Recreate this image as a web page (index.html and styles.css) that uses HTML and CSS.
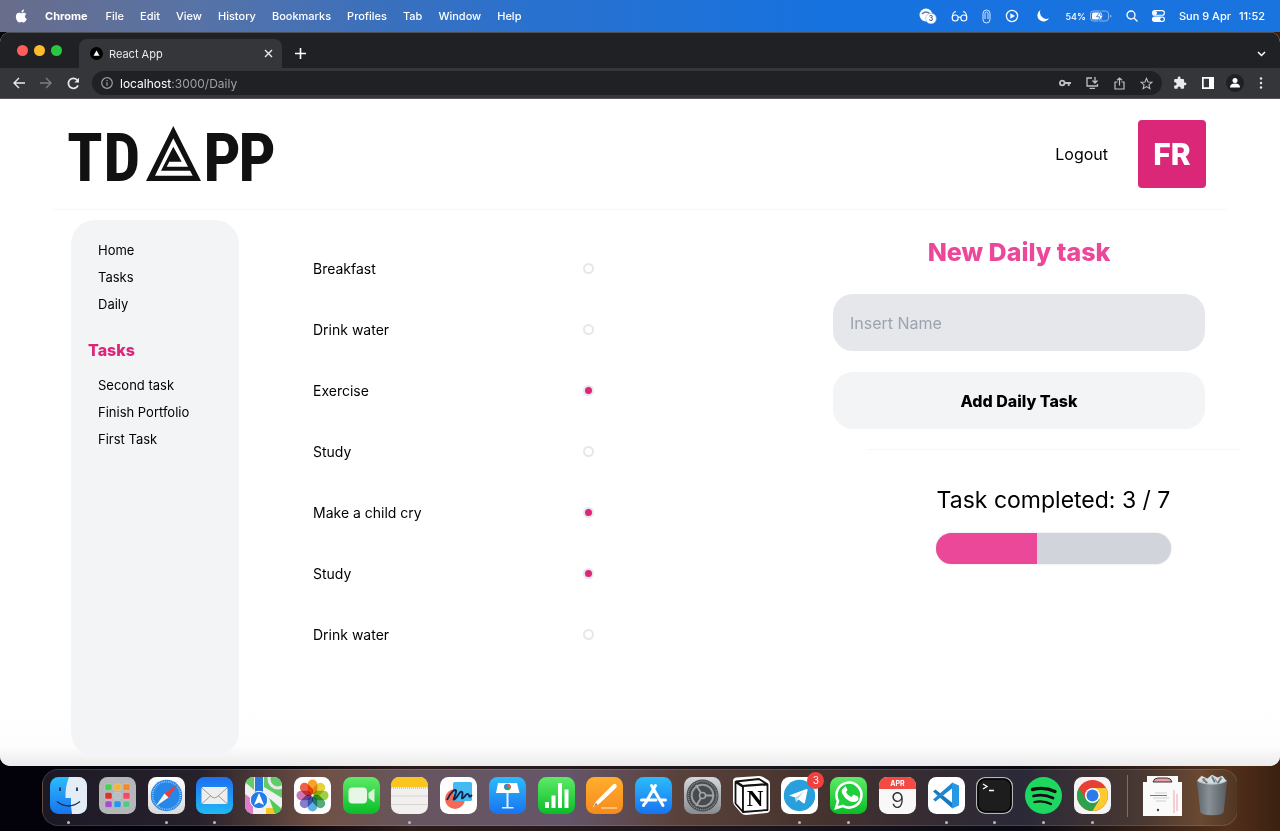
FILE: index.html
```html
<!DOCTYPE html>
<html lang="en">
<head>
<meta charset="utf-8">
<title>React App</title>
<link rel="stylesheet" href="styles.css">
</head>
<body>
<div class="desktop">
  <header class="menubar">
    <nav class="menus" aria-label="Menu bar">
      <svg class="apple" viewBox="0 0 24 24" width="14" height="14" fill="currentColor"><path d="M17 13c0-3 2.400-4.300 2.500-4.400-1.400-2-3.500-2.300-4.200-2.300-1.800-.2-3.500 1-4.400 1s-2.300-1-3.700-1C4 6.400 1.500 9 1.500 13.200 1.500 18 5 23 7.500 23c1.300 0 1.900-.9 3.600-.9s2.200.9 3.600.9c2.800 0 5-4.500 5.500-6-.1 0-3.200-1.200-3.200-4zM14.300 4.500c.8-1 1.300-2.300 1.100-3.600-1.100 0-2.500.8-3.300 1.700-.7.800-1.300 2.100-1.200 3.400 1.300.1 2.600-.6 3.400-1.500z"/></svg>
      <b>Chrome</b><span>File</span><span>Edit</span><span>View</span><span>History</span><span>Bookmarks</span><span>Profiles</span><span>Tab</span><span>Window</span><span>Help</span>
    </nav>
    <div class="status">
      <svg width="18" height="16" viewBox="0 0 18 16"><circle cx="7" cy="7" r="6.500" fill="#fff"/><path d="M3 6q4-4 8 0" stroke="#667ba8" stroke-width="1.500" fill="none"/><circle cx="12" cy="10.500" r="5.300" fill="#fff" stroke="#8aaade" stroke-width=".6"/><text x="12" y="13" text-anchor="middle" class="tiny-num">3</text></svg>
      <svg width="17" height="14" viewBox="0 0 17 14" fill="none" stroke="#fff" stroke-width="1.100"><circle cx="4.200" cy="9" r="3"/><circle cx="12.800" cy="9" r="3"/><path d="M7.200 8.500q1.300-1 2.600 0M1.200 8.500Q1.500 3 5 2.500M15.800 8.500Q15.500 3 12 2.500"/></svg>
      <svg width="9" height="15" viewBox="0 0 9 15" fill="none" stroke="#dbe8fb" stroke-width="1"><path d="M1 4.500a3.500 3.500 0 0 1 7 0v6a3.500 3.500 0 0 1-7 0zM3 10V4.500a1.500 1.500 0 0 1 3 0V10"/></svg>
      <svg width="14" height="14" viewBox="0 0 14 14"><circle cx="7" cy="7" r="5.600" fill="none" stroke="#fff" stroke-width="1.300"/><path d="M5.300 4.300v5.400L10 7z" fill="#fff"/></svg>
      <svg class="moon" width="14" height="14" viewBox="0 0 14 14"><path d="M4.500 1a6.200 6.200 0 1 0 8.600 8.200A6.400 6.400 0 0 1 4.500 1z" fill="#fff"/></svg>
      <span class="battery">54%<svg width="22" height="12" viewBox="0 0 22 12"><rect x=".5" y="1" width="18" height="10" rx="3" fill="none" stroke="#8db6ef"/><rect x="2" y="2.500" width="10" height="7" rx="1.500" fill="#fff"/><path d="M20 4.500v3q1.500-.5 1.500-1.500T20 4.500z" fill="#8db6ef"/><path d="M11.500 0L6.500 6.700h3L8.500 12l5-6.700h-3z" fill="#fff" stroke="#2272dc" stroke-width=".8"/></svg></span>
      <svg width="12" height="12" viewBox="0 0 12 12" fill="none" stroke="#fff" stroke-width="1.300"><circle cx="5" cy="5" r="4"/><path d="M8 8l3.500 3.500"/></svg>
      <svg width="13" height="12" viewBox="0 0 13 12"><rect x=".6" y=".6" width="11.800" height="4.600" rx="2.300" fill="none" stroke="#fff" stroke-width="1.100"/><circle cx="3" cy="2.900" r="2" fill="#fff"/><rect y="6.600" width="13" height="5.400" rx="2.700" fill="#fff"/><circle cx="10" cy="9.300" r="1.700" fill="#2272dc"/></svg>
      <span class="clock"><span>Sun 9 Apr</span><span>11:52</span></span>
    </div>
  </header>

  <main class="window">
    <div class="tabstrip">
      <div class="lights"><i class="red"></i><i class="yellow"></i><i class="green"></i></div>
      <div class="tab">
        <svg width="13" height="13" viewBox="0 0 13 13"><circle cx="6.500" cy="6.500" r="6.500"/><path d="M6.500 3.500l3 5.200h-6z" fill="#fff"/></svg>
        <span>React App</span>
        <button class="plain" aria-label="Close tab"><svg width="9" height="9" viewBox="0 0 9 9" stroke="#e8eaed" stroke-width="1.400"><path d="M1 1l7 7M8 1L1 8"/></svg></button>
      </div>
      <button class="plain newtab" aria-label="New tab"><svg width="11" height="11" viewBox="0 0 11 11" stroke="#fff" stroke-width="1.600"><path d="M5.500 0v11M0 5.500h11"/></svg></button>
      <button class="plain chevron" aria-label="Search tabs"><svg width="9" height="6" viewBox="0 0 9 6" fill="none" stroke="#fff" stroke-width="1.500"><path d="M1 1l3.500 3.500L8 1"/></svg></button>
    </div>
    <div class="toolbar">
      <button class="plain" aria-label="Back"><svg width="12" height="12" viewBox="0 0 12 12" fill="none" stroke="#e8eaed" stroke-width="1.400"><path d="M12 6H1M6 1L1 6l5 5"/></svg></button>
      <button class="plain" aria-label="Forward"><svg width="12" height="12" viewBox="0 0 12 12" fill="none" stroke="#7d7e82" stroke-width="1.400"><path d="M0 6h11M6 1l5 5-5 5"/></svg></button>
      <button class="plain" aria-label="Reload"><svg width="13" height="13" viewBox="0 0 13 13" fill="none" stroke="#e8eaed" stroke-width="1.700"><path d="M11 8.300A5 5 0 1 1 10.200 3"/><path d="M12 .8v4.700H7.300z" fill="#e8eaed" stroke="none"/></svg></button>
      <div class="omnibox">
        <svg width="12" height="12" viewBox="0 0 12 12" fill="none" stroke="#9aa0a6" stroke-width="1.200"><circle cx="6" cy="6" r="5.300"/><path d="M6 5.200v3.600M6 3v1.300"/></svg>
        <span class="url"><em>localhost</em>:3000/Daily</span>
        <svg width="12" height="8" viewBox="0 0 12 8" fill="none" stroke="#bdc1c6" stroke-width="1.800"><circle cx="3.200" cy="4" r="2.300"/><path d="M5.600 4H12M9.700 4v2.900"/></svg>
        <svg width="13" height="12" viewBox="0 0 13 12" fill="none" stroke="#bdc1c6" stroke-width="1.300"><path d="M6 1H1v8h10.500V7M3.500 11.300H9M9 0v5.500M6.500 3.500L9 6l2.500-2.500"/></svg>
        <svg width="11" height="13" viewBox="0 0 11 13" fill="none" stroke="#bdc1c6" stroke-width="1.200"><path d="M3.500 5H1v7h9V5H7.500M5.500 8.500V1M3 3.300L5.500 1 8 3.300"/></svg>
        <svg width="13" height="13" viewBox="0 0 24 24" fill="none" stroke="#bdc1c6" stroke-width="2"><path d="M12 2.500l2.800 6.700 7.200.6-5.500 4.700 1.700 7L12 17.800l-6.200 3.700 1.700-7L2 9.800l7.200-.6z"/></svg>
      </div>
      <svg width="14" height="14" viewBox="0 0 24 24" fill="#e8eaed"><path d="M20.500 11H19V7c0-1.100-.9-2-2-2h-4V3.500a2.500 2.500 0 0 0-5 0V5H4c-1.100 0-2 .9-2 2v3.800h1.500a2.700 2.700 0 0 1 0 5.400H2V20c0 1.100.9 2 2 2h3.800v-1.500a2.700 2.700 0 0 1 5.400 0V22H17c1.100 0 2-.9 2-2v-4h1.500a2.500 2.500 0 0 0 0-5z"/></svg>
      <svg width="12" height="12" viewBox="0 0 12 12"><path d="M0 0h12v12H0zM1.700 1.700v8.600H7V1.700z" fill="#fff" fill-rule="evenodd"/></svg>
      <svg class="profile" width="18" height="18" viewBox="0 0 18 18"><circle cx="9" cy="9" r="9" fill="#1f2023"/><circle cx="9" cy="6.500" r="2.500" fill="#fff"/><path d="M4 13.500q0-4 5-4t5 4z" fill="#fff"/></svg>
      <svg width="4" height="12" viewBox="0 0 4 12" fill="#e8eaed"><circle cx="2" cy="1.500" r="1.200"/><circle cx="2" cy="6" r="1.200"/><circle cx="2" cy="10.500" r="1.200"/></svg>
    </div>

    <div class="page">
      <header class="site-head">
        <svg class="logo" width="208" height="100" viewBox="0 -20 208 100" role="img" aria-label="TDAPP">
          <g class="wordmark"><text x="16" y="57">T</text><text x="53" y="57">D</text><text x="153" y="57">P</text><text x="188" y="57">P</text></g>
          <path d="M104.300 2L132 57H77zM104.300 14.300L86 51.700h37.700z" fill="#111" fill-rule="evenodd"/>
          <path d="M104.300 22.700L112.700 37.700H100.300L97.700 42.700H120L124 46.700H92z" fill="#111"/>
        </svg>
        <div class="account"><a href="#logout">Logout</a><div class="avatar">FR</div></div>
      </header>
      <div class="columns">
        <aside class="sidebar">
          <nav><a href="#home">Home</a><a href="#tasks">Tasks</a><a href="#daily">Daily</a></nav>
          <h2>Tasks</h2>
          <nav><a href="#second">Second task</a><a href="#portfolio">Finish Portfolio</a><a href="#first">First Task</a></nav>
        </aside>
        <ul class="tasks">
          <li><label for="t1">Breakfast</label><input type="checkbox" id="t1"></li>
          <li><label for="t2">Drink water</label><input type="checkbox" id="t2"></li>
          <li><label for="t3">Exercise</label><input type="checkbox" id="t3" checked></li>
          <li><label for="t4">Study</label><input type="checkbox" id="t4"></li>
          <li><label for="t5">Make a child cry</label><input type="checkbox" id="t5" checked></li>
          <li><label for="t6">Study</label><input type="checkbox" id="t6" checked></li>
          <li><label for="t7">Drink water</label><input type="checkbox" id="t7"></li>
        </ul>
        <section class="panel">
          <form>
            <h1>New Daily task</h1>
            <input type="text" placeholder="Insert Name" aria-label="Insert Name">
            <button type="button">Add Daily Task</button>
          </form>
          <div class="summary">
            <p>Task completed: 3 / 7</p>
            <div class="progress" role="progressbar" aria-label="Tasks completed" aria-valuemin="0" aria-valuemax="7" aria-valuenow="3"><div class="bar" style="width:42.8%"></div></div>
          </div>
        </section>
      </div>
    </div>
  </main>

  <svg class="defs" width="0" height="0" aria-hidden="true"><defs>
    <linearGradient id="blue" x2="0" y2="1"><stop stop-color="#1d6ff0"/><stop offset="1" stop-color="#22b8f5"/></linearGradient>
    <linearGradient id="sky" x2="0" y2="1"><stop stop-color="#2bbcfb"/><stop offset="1" stop-color="#1873f0"/></linearGradient>
    <linearGradient id="green" x2="0" y2="1"><stop stop-color="#5eea68"/><stop offset="1" stop-color="#08bd27"/></linearGradient>
    <linearGradient id="orange" x2="0" y2="1"><stop stop-color="#ffae2d"/><stop offset="1" stop-color="#f78a1c"/></linearGradient>
    <linearGradient id="silver" x2="0" y2="1"><stop stop-color="#fff"/><stop offset="1" stop-color="#d9d9d9"/></linearGradient>
    <linearGradient id="grey" x2="0" y2="1"><stop stop-color="#d3d7dc"/><stop offset="1" stop-color="#888c91"/></linearGradient>
    <linearGradient id="can" x2="1" y2="0"><stop stop-color="#5d666b"/><stop offset=".4" stop-color="#899196"/><stop offset="1" stop-color="#555b60"/></linearGradient>
    <clipPath id="tile"><rect width="37" height="37" rx="8.500"/></clipPath>
  </defs></svg>

  <footer class="shelf">
    <div class="dock">
      <div class="apps">
        <div class="app on"><svg viewBox="0 0 37 37"><g clip-path="url(#tile)"><path fill="url(#sky)" d="M0 0h37v37H0z"/><path d="M19 0q-4 10-3.500 21H21q-.5 8 1 16h15V0z" fill="#e4edf5"/></g><path d="M10 10.500v3.500M27 10.500v3.500" stroke="#17304c" stroke-width="1.800"/><path d="M7 24.500q11.500 9 23 0" fill="none" stroke="#17304c" stroke-width="1.300"/></svg></div>
        <div class="app"><svg viewBox="0 0 37 37"><rect width="37" height="37" rx="8.500" fill="#b4b6ba"/><g stroke="#d6d6d8" stroke-width=".4"><rect x="6" y="7" width="7" height="6.500" rx="1.500" fill="#4bd057"/><rect x="15" y="7" width="7" height="6.500" rx="1.500" fill="#f6b52c"/><rect x="24" y="7" width="7" height="6.500" rx="1.500" fill="#f18a29"/><rect x="6" y="15.500" width="7" height="6.500" rx="1.500" fill="#dc3131"/><rect x="15" y="15.500" width="7" height="6.500" rx="1.500" fill="#b9bec4"/><rect x="24" y="15.500" width="7" height="6.500" rx="1.500" fill="#fa4766"/><rect x="6" y="24" width="7" height="6.500" rx="1.500" fill="#aa4bd1"/><rect x="15" y="24" width="7" height="6.500" rx="1.500" fill="#2497ee"/><rect x="24" y="24" width="7" height="6.500" rx="1.500" fill="#54ca80"/></g></svg></div>
        <div class="app on"><svg viewBox="0 0 37 37"><rect width="37" height="37" rx="8.500" fill="url(#silver)"/><circle cx="18.500" cy="18.500" r="15.700" fill="#2787e8"/><circle cx="18.500" cy="18.500" r="13.900" fill="none" stroke="#b6dcfb" stroke-width="1.800" stroke-dasharray=".6 1.200"/><path d="M29.500 7.500L20.500 20.500l-4-4z" fill="#ee3b36"/><path d="M7.500 29.500l9-13 4 4z" fill="#f5f5f5"/></svg></div>
        <div class="app on"><svg viewBox="0 0 37 37"><rect width="37" height="37" rx="8.500" fill="url(#blue)"/><rect x="5.500" y="10" width="26" height="17" rx="1.500" fill="#eee"/><path d="M6 11l10 9q2.500 2 5 0l10-9M6 26.500l9-8M31 26.500l-9-8" fill="none" stroke="#888" stroke-width=".8"/></svg></div>
        <div class="app"><svg viewBox="0 0 37 37"><g clip-path="url(#tile)"><path fill="#eef1ef" d="M0 0h37v37H0z"/><path d="M0 0h9v13L0 5zM19 0h18v21L19 10z" fill="#61cc69"/><circle cx="33" cy="2" r="9" fill="none" stroke="#e8e8e8" stroke-width="3"/><path d="M0 17l8 6v14H0z" fill="#df7cc9"/><path d="M21 31h9v6h-9z" fill="#f9c624"/><path d="M24 21l13 11v5H30z" fill="#4ecb58"/><path d="M10 0h8v19h-8z" fill="#2b79de"/></g><circle cx="14" cy="23" r="8.700" fill="#247ce9" stroke="#fff"/><path d="M14 16l5 12-5-2.500L9 28z" fill="#fff"/></svg></div>
        <div class="app"><svg viewBox="0 0 37 37"><rect width="37" height="37" rx="8.500" fill="#fff"/><g class="petals"><rect x="13.700" y="2.500" width="9.600" height="15" rx="4.800" fill="#f9a22a"/><rect x="13.700" y="2.500" width="9.600" height="15" rx="4.800" fill="#e3d334" transform="rotate(45 18.500 18.500)"/><rect x="13.700" y="2.500" width="9.600" height="15" rx="4.800" fill="#a0cf45" transform="rotate(90 18.500 18.500)"/><rect x="13.700" y="2.500" width="9.600" height="15" rx="4.800" fill="#50af79" transform="rotate(135 18.500 18.500)"/><rect x="13.700" y="2.500" width="9.600" height="15" rx="4.800" fill="#61aee1" transform="rotate(180 18.500 18.500)"/><rect x="13.700" y="2.500" width="9.600" height="15" rx="4.800" fill="#8a7dcc" transform="rotate(225 18.500 18.500)"/><rect x="13.700" y="2.500" width="9.600" height="15" rx="4.800" fill="#cb79b2" transform="rotate(270 18.500 18.500)"/><rect x="13.700" y="2.500" width="9.600" height="15" rx="4.800" fill="#ee604c" transform="rotate(315 18.500 18.500)"/></g></svg></div>
        <div class="app"><svg viewBox="0 0 37 37"><rect width="37" height="37" rx="8.500" fill="url(#green)"/><rect x="5.500" y="10.500" width="18.500" height="16" rx="4" fill="#e6f7e6"/><path d="M25.500 16l6-4.500v14l-6-4.500z" fill="#d9f3da"/></svg></div>
        <div class="app on"><svg viewBox="0 0 37 37"><g clip-path="url(#tile)"><path fill="#f1f0ee" d="M0 0h37v37H0z"/><path fill="#f9c51e" d="M0 0h37v10H0z"/><path d="M0 11h37" stroke="#aaa" stroke-dasharray="1 1"/><path d="M0 19h37M0 27.500h37" stroke="#d6d5d3"/></g></svg></div>
        <div class="app"><svg viewBox="0 0 37 37"><rect width="37" height="37" rx="8.500" fill="#fff"/><circle cx="15" cy="22" r="10" fill="#f36b58"/><rect x="13" y="5" width="19" height="19" rx="1.500" fill="#45baf0"/><path d="M7 23C10 15 17 10 16 15s-4 9-1 7 5-9 7-7-2 8 1 6 3-5 5-4 0 5 4 1" fill="none" stroke="#142549" stroke-width="1.900"/></svg></div>
        <div class="app"><svg viewBox="0 0 37 37"><rect width="37" height="37" rx="8.500" fill="url(#sky)"/><path d="M9 6h19l2.500 10H7z" fill="#fff"/><path d="M17.500 16h2v14h-2zM13 30h11.500v1.500H13z" fill="#e0effa"/><circle cx="18.500" cy="10" r="3.300" fill="#29a46d"/><path d="M18.500 10V6.700a3.300 3.300 0 0 1 3 4.700z" fill="#f05b42"/><path d="M18.500 10l-3 1.500a3.300 3.300 0 0 1 3-4.800z" fill="#2e83ee"/></svg></div>
        <div class="app"><svg viewBox="0 0 37 37"><rect width="37" height="37" rx="8.500" fill="url(#green)"/><path d="M7 25h4v6H7zM13.500 18.500h4V31h-4zM20 6h4v25h-4zM26.500 12.500h4V31h-4z" fill="#fff"/></svg></div>
        <div class="app"><svg viewBox="0 0 37 37"><rect width="37" height="37" rx="8.500" fill="url(#orange)"/><path d="M6.500 30.500l3.500-6L27 7.500q2-1.500 3.200 0t0 3.200L13 27z" fill="#fff"/><path d="M7.500 30l2.500-4 1.500 1.500z" fill="#ad713c"/><path d="M15 31h16" stroke="#ffe0af" stroke-width="1.200"/></svg></div>
        <div class="app"><svg viewBox="0 0 37 37"><rect width="37" height="37" rx="8.500" fill="url(#sky)"/><g stroke="#fff" stroke-width="3" stroke-linecap="round"><path d="M20.500 8.500L10.500 26M16.500 8.500l11.500 20M6.500 23h14.500M25.500 23h5M8.500 28.500l.7-1.300"/></g></svg></div>
        <div class="app"><svg viewBox="0 0 37 37"><rect width="37" height="37" rx="8.500" fill="url(#grey)"/><circle cx="18.500" cy="18.500" r="16" fill="#484b4d"/><circle cx="18.500" cy="18.500" r="14.300" fill="none" stroke="#8e9194" stroke-width="1.500" stroke-dasharray="1 1"/><circle cx="18.500" cy="18.500" r="10.800" fill="none" stroke="#9a9da0" stroke-width="2"/><circle cx="18.500" cy="18.500" r="3" fill="none" stroke="#a3a6a8" stroke-width="1.500"/><path d="M21 18.500h9M17 16l-5-8M17 21l-5 8" stroke="#a3a6a8" stroke-width="1.800"/></svg></div>
        <div class="app"><svg viewBox="0 0 37 37"><path d="M0 4Q0 1 3 .5L26-1q2 0 4 1l5 3q2 1 2 4v25q0 4-4 4L13 38q-3 0-5-2l-6-7q-2-2-2-5z" fill="#fff"/><path d="M3 4.500L26 2l8 5-24 2z" fill="#fff" stroke="#111" stroke-width="1.800" stroke-linejoin="round"/><path d="M2.500 5L10 10v25l-7.500-8.500z" fill="#fff" stroke="#111" stroke-width="1.800" stroke-linejoin="round"/><path d="M10 9l24.500-1.500V33L10 35z" fill="#fff" stroke="#111" stroke-width="1.800" stroke-linejoin="round"/><text x="22" y="29" text-anchor="middle" class="notion-n">N</text></svg></div>
        <div class="app on"><svg viewBox="0 0 37 37"><rect width="37" height="37" rx="8.500" fill="#fff"/><circle cx="18.500" cy="18.500" r="15.700" fill="#299fdb"/><path d="M8 18.500L25.500 12q1.500-.5 1 1.500l-2.500 12q-.5 1.500-2 .5l-4.500-3.500-2.500 2.500-.7-4.500z" fill="#fff"/><path d="M14.300 20.500l9-6-6.500 7-1.500 3.500z" fill="#b5d5ea"/></svg><span class="badge">3</span></div>
        <div class="app on"><svg viewBox="0 0 37 37"><rect width="37" height="37" rx="8.500" fill="url(#green)"/><path d="M6 31l2-7a12.500 12.500 0 1 1 4.800 4.900z" fill="#20ce3b" stroke="#fff" stroke-width="2.600"/><path d="M13.500 11q-3 2-1 6t6 6.500 7.500 1 2-5l-4.500-2-2 2.500q-4-1.500-5.500-5l1.500-2-2-4z" fill="#fff"/></svg></div>
        <div class="app"><svg viewBox="0 0 37 37"><g clip-path="url(#tile)"><path fill="#f8f8f8" d="M0 0h37v37H0z"/><path fill="#f34a44" d="M0 0h37v12H0z"/></g><text x="18.500" y="9" text-anchor="middle" class="cal-month">APR</text><text x="18.500" y="31" text-anchor="middle" class="cal-day">9</text></svg></div>
        <div class="app on"><svg viewBox="0 0 37 37"><rect width="37" height="37" rx="8.500" fill="#fff"/><path d="M5 14.500l2.500-2 17 13.500v5.500z" fill="#1678bd"/><path d="M5 22.500l2.500 2 17-13.500V5.500z" fill="#1f86cf"/><path d="M24 5.500l7 3v20l-7 3z" fill="#2798e6"/></svg></div>
        <div class="app on"><svg viewBox="0 0 37 37"><rect x=".7" y=".7" width="35.600" height="35.600" rx="8.500" fill="#1d1d1d" stroke="#b6b6b6" stroke-width="1.400"/><rect x="2" y="2" width="33" height="33" rx="7.500" fill="none" stroke="#000" stroke-width="1.500"/><path d="M7 7l4 2.500L7 12M13 13.500h5" fill="none" stroke="#fff" stroke-width="1.300"/></svg></div>
        <div class="app on"><svg viewBox="0 0 37 37"><circle cx="18.500" cy="18.500" r="18.500" fill="#1ed760"/><g fill="none" stroke="#111" stroke-linecap="round"><path d="M7.500 12.500q12-3 22.500 2" stroke-width="3.400"/><path d="M8.500 19q10.500-2.500 19.500 2" stroke-width="2.800"/><path d="M9.500 25q9-2 16.500 2" stroke-width="2.300"/></g></svg></div>
        <div class="app on"><svg viewBox="0 0 37 37"><rect width="37" height="37" rx="8.500" fill="#f4f4f4"/><circle cx="18.500" cy="18.500" r="15.500" fill="#e64134"/><path d="M5 11A15.500 15.500 0 0 0 18.500 34l7-11.500H12z" fill="#2da24d"/><path d="M18.500 34A15.500 15.500 0 0 0 32 11H18.500l7 11.500z" fill="#fdcb2e"/><circle cx="18.500" cy="18.500" r="7.600" fill="#fff"/><circle cx="18.500" cy="18.500" r="6" fill="#2d7aea"/></svg></div>
      </div>
      <div class="divider"></div>
      <svg class="doc" width="39" height="40" viewBox="0 0 39 40"><path d="M4 0h31v6h4v34H0V6h4z" fill="#fafafa"/><path d="M10 6q1-4 5-4h9q4 0 5 4z" fill="#ee9aa5" stroke="#333"/><path d="M12 17h12M10 22h16M13 25h10" stroke="#bbb" stroke-width=".7"/><path d="M7 19.500h17" stroke="#777"/><path d="M31 14v23M34 18v17" stroke="#f3cfd2" stroke-width="2"/><circle cx="15" cy="34" r="1.200" fill="#444"/></svg>
      <svg class="trash" width="32" height="43" viewBox="0 0 34 44"><path d="M2 5l4-4 6 3 5-4 6 3 5-2 4 5v5H2z" fill="#d9dcdc"/><path d="M7 4l5 5M17 2l3 6M27 3l-4 6" stroke="#557e8e" stroke-width="2"/><path d="M20 4l3 5M10 3l-3 5" stroke="#bd6f64"/><path d="M1 6l3.500 33q.5 4 12.500 4t12.500-4L33 6q-5 4-16 4T1 6z" fill="url(#can)"/><path d="M1 6q5 4 16 4t16-4" fill="none" stroke="#afb6ba"/></svg>
    </div>
  </footer>
</div>
</body>
</html>
```

FILE: styles.css
```css
* { box-sizing: border-box; }
body { margin: 0; font-family: Inter, "Liberation Sans", sans-serif; color: #000; }
svg { display: block; flex: none; }
a { color: inherit; text-decoration: none; }
.defs { position: absolute; }
.plain { border: 0; padding: 0; background: none; display: flex; }

.desktop {
  min-height: 100vh;
  display: flex;
  flex-direction: column;
  background: linear-gradient(90deg, #03020b 0 22%, #2d1c19 32%, #18141d 60%, #090911 80%, #52301b 96%, #3b2010);
}

.menubar {
  height: 32px;
  padding: 0 15px;
  display: flex;
  justify-content: space-between;
  align-items: center;
  color: #fff;
  font-size: 11px;
  font-weight: 500;
  background: linear-gradient(90deg, #696d8b, #5873a6 15%, #3a70bd 30%, #2971cf 42%, #1672df 65%, #1a74df);
}
.menus { display: flex; align-items: center; gap: 16px; }
.menus b { font-weight: 700; margin-right: 2px; }
.status { display: flex; align-items: center; gap: 14px; }
.moon { margin-left: 3px; }
.battery { display: flex; align-items: center; gap: 4px; font-size: 9px; margin-left: 2px; }
.clock { display: flex; gap: 8px; }
.tiny-num { font-size: 7px; font-weight: 700; fill: #54699a; }

.window {
  flex: 1;
  display: flex;
  flex-direction: column;
  border-radius: 10px;
  overflow: hidden;
  background: #fff;
}
.tabstrip { height: 36px; display: flex; align-items: stretch; background: #202124; border-top: 1px solid #4c4f54; }
.lights { display: flex; gap: 6px; align-items: center; width: 79px; padding-left: 17px; }
.lights i { width: 11px; height: 11px; border-radius: 50%; }
.red { background: #ff5c5c; }
.yellow { background: #fdbc2e; }
.green { background: #28c840; }
.tab {
  width: 203px;
  margin-top: 6px;
  padding: 0 9px 0 11px;
  border-radius: 8px 8px 0 0;
  display: flex;
  align-items: center;
  gap: 6px;
  background: #35363a;
  color: #e8eaed;
  font-size: 11px;
}
.tab span { flex: 1; }
.newtab { align-items: center; margin: 6px 0 0 13px; }
.chevron { align-items: center; margin: 6px 14px 0 auto; }
.toolbar { height: 31px; padding: 0 17px 0 13px; display: flex; align-items: center; gap: 15px; background: #35363a; border-bottom: 1px solid #55565a; }
.omnibox {
  flex: 1;
  height: 24px;
  margin: 0 -4px 0 -3px;
  padding: 0 9px;
  border-radius: 12px;
  display: flex;
  align-items: center;
  gap: 15px;
  background: #202124;
  font-size: 12px;
}
.url { flex: 1; color: #9aa0a6; margin-left: -8px; }
.url em { font-style: normal; color: #fff; }
.profile { margin-left: -3px; }

.page {
  flex: 1;
  display: flex;
  flex-direction: column;
  padding: 0 53px 10px;
  background: linear-gradient(0deg, #ebebeb, #fdfdfd 20px, #fff 60px);
}
.site-head {
  height: 111px;
  padding: 0 21px 0 16px;
  display: flex;
  align-items: center;
  justify-content: space-between;
  border-bottom: 1px solid #f7f7f8;
}
.logo { overflow: visible; }
.wordmark { font-family: "Liberation Sans Narrow", "Roboto Condensed", "DejaVu Sans Condensed", sans-serif; font-weight: 700; font-size: 66px; fill: #111; text-anchor: middle; }
.account { display: flex; align-items: center; gap: 30px; font-size: 16px; }
.avatar {
  width: 68px;
  height: 68px;
  border-radius: 4px;
  display: grid;
  place-items: center;
  background: #db2777;
  color: #fff;
  font-size: 30px;
  font-weight: 800;
}

.columns { flex: 1; display: grid; grid-template-columns: 168px 281px 1fr; column-gap: 74px; padding: 10px 22px 0 18px; }
.sidebar { padding: 17px; border-radius: 24px; background: #f3f4f6; }
.sidebar nav { display: flex; flex-direction: column; padding-left: 10px; font-size: 13px; line-height: 27px; }
.sidebar h2 { margin: 18px 0 8px; font-size: 16px; line-height: 28px; font-weight: 800; color: #db2777; }
.tasks { list-style: none; margin: 0; padding: 18px 0 0; font-size: 14px; }
.tasks li { height: 61px; display: flex; align-items: center; justify-content: space-between; }
.tasks input { appearance: none; width: 11px; height: 11px; margin: 0; border: 2px solid #e5e7eb; border-radius: 50%; background: #fff; }
.tasks input:checked { background: #db2777; }

.panel { width: 372px; justify-self: end; }
.panel form { display: flex; flex-direction: column; gap: 21px; }
.panel h1 { margin: 15px 0 4px; font-size: 25px; line-height: 34px; font-weight: 800; text-align: center; color: #ec4899; }
.panel input, .panel button { height: 57px; border: 0; border-radius: 20px; font-family: inherit; font-size: 16px; }
.panel input { padding: 0 17px; background: #e5e7eb; }
.panel input::placeholder { color: #9ca3af; }
.panel button { background: #f3f4f6; color: #000; font-weight: 800; }
.summary { margin: 20px -35px 0 34px; border-top: 1px solid #f7f7f8; display: flex; flex-direction: column; align-items: center; }
.summary p { margin: 32px 0 15px; font-size: 23px; line-height: 36px; }
.progress { width: 235px; height: 31px; border-radius: 16px; overflow: hidden; background: #d1d5db; box-shadow: 0 0 2px #d1d5db; }
.bar { height: 100%; background: #ec4899; }

.shelf { padding: 3px 42px 5px; }
.dock {
  height: 57px;
  padding: 0 9px 4px 7px;
  display: flex;
  align-items: center;
  border-radius: 16px;
  border: 1px solid rgba(255, 255, 255, .12);
  background: linear-gradient(90deg, #1c1926, #27212b 13%, #705044 23%, #67565f 31%, #65556a 44%, #5a423c 53%, #49352f 63%, #342b33 75%, #2b2938 82%, #493832 92%, #694931 97%, #503624);
}
.apps { flex: 1; display: flex; justify-content: space-between; }
.app { position: relative; width: 37px; height: 37px; }
.app svg { width: 37px; height: 37px; overflow: visible; }
.petals rect { mix-blend-mode: multiply; }
.on::after { content: ""; position: absolute; left: 17px; bottom: -10px; width: 3px; height: 3px; border-radius: 50%; background: #bdbac0; }
.badge { position: absolute; top: -5px; right: -6px; width: 17px; height: 17px; border-radius: 50%; background: #f04141; color: #fff; font-size: 10px; line-height: 17px; text-align: center; }
.notion-n { font-family: "Liberation Serif", serif; font-size: 23px; font-weight: 700; }
.cal-month { font-size: 7px; font-weight: 700; fill: #fff; }
.cal-day { font-size: 22px; font-weight: 300; fill: #333; }
.divider { width: 1px; height: 42px; margin: 0 15px 0 16px; background: #77706d; }
.doc { margin-right: 14px; }
```
